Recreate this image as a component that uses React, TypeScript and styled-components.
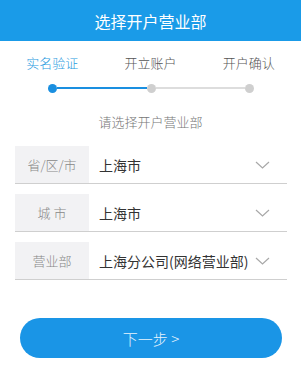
import React from "react"
import styled, { createGlobalStyle } from "styled-components"

const GlobalStyle = createGlobalStyle`
  html, body {
    margin: 0;
    padding: 0;
    background: #ffffff;
    font-family: "Noto Sans CJK SC", "Liberation Sans", sans-serif;
  }
`

const Page = styled.div`
  width: 301px;
  height: 373px;
  background: #ffffff;
  display: flex;
  flex-direction: column;
`

const Header = styled.div`
  height: 41px;
  background: #1a9be8;
  color: #ffffff;
  font-size: 16px;
  display: flex;
  align-items: center;
  justify-content: center;
`

const Steps = styled.div`
  display: grid;
  grid-template-columns: repeat(3, 1fr);
  padding: 12px 3px 0;
`

const StepLabel = styled.div<{ $active?: boolean }>`
  text-align: center;
  font-size: 13px;
  font-weight: 300;
  line-height: 20px;
  color: ${(p) => (p.$active ? "#2a9be0" : "#555555")};
`

const Track = styled.div`
  display: flex;
  align-items: center;
  padding: 0 47px 0 48px;
  margin-top: 10px;
  height: 10px;
`

const Dot = styled.span<{ $active?: boolean }>`
  width: 9px;
  height: 9px;
  border-radius: 50%;
  flex-shrink: 0;
  background: ${(p) => (p.$active ? "#1a8fe0" : "#cfcfcf")};
`

const Line = styled.span<{ $active?: boolean }>`
  flex: 1;
  height: 2px;
  background: ${(p) => (p.$active ? "#1a8fe0" : "#dddddd")};
`

const Subtitle = styled.div`
  margin-top: 19px;
  text-align: center;
  font-size: 13px;
  font-weight: 300;
  color: #777777;
  line-height: 20px;
`

const Form = styled.div`
  margin-top: 14px;
  padding: 0 14px 0 15px;
  display: flex;
  flex-direction: column;
  gap: 10px;
`

const Row = styled.div`
  display: flex;
  align-items: center;
  height: 37px;
  border-bottom: 1px solid #cfcfcf;
`

const Label = styled.div`
  width: 74px;
  height: 100%;
  background: #f2f2f4;
  color: #888888;
  font-size: 13px;
  font-weight: 300;
  display: flex;
  align-items: center;
  justify-content: center;
  flex-shrink: 0;
`

const Value = styled.div`
  flex: 1;
  padding-left: 10px;
  font-size: 14px;
  color: #333333;
`

const Chevron = styled.svg`
  width: 15px;
  height: 8px;
  margin-right: 17px;
`

const ButtonWrap = styled.div`
  margin-top: 38px;
  padding: 0 19px 0 20px;
`

const NextButton = styled.button`
  width: 100%;
  height: 40px;
  border: none;
  border-radius: 20px;
  background: #1a95e6;
  color: #e8f4fd;
  font-family: inherit;
  font-size: 15px;
  font-weight: 300;
  display: flex;
  align-items: center;
  justify-content: center;
`

const fields = [
  { label: "省/区/市", value: "上海市" },
  { label: "城 市", value: "上海市" },
  { label: "营业部", value: "上海分公司(网络营业部)" },
]

export default function App() {
  return (
    <Page>
      <GlobalStyle />
      <Header>选择开户营业部</Header>
      <Steps>
        <StepLabel $active>实名验证</StepLabel>
        <StepLabel>开立账户</StepLabel>
        <StepLabel>开户确认</StepLabel>
      </Steps>
      <Track>
        <Dot $active />
        <Line $active />
        <Dot />
        <Line />
        <Dot />
      </Track>
      <Subtitle>请选择开户营业部</Subtitle>
      <Form>
        {fields.map((f) => (
          <Row key={f.label}>
            <Label>{f.label}</Label>
            <Value>{f.value}</Value>
            <Chevron viewBox="0 0 15 8">
              <path d="M1 1 L7.5 7 L14 1" fill="none" stroke="#a8a8a8" strokeWidth="1.2" />
            </Chevron>
          </Row>
        ))}
      </Form>
      <ButtonWrap>
        <NextButton>下一步 &gt;</NextButton>
      </ButtonWrap>
    </Page>
  )
}
